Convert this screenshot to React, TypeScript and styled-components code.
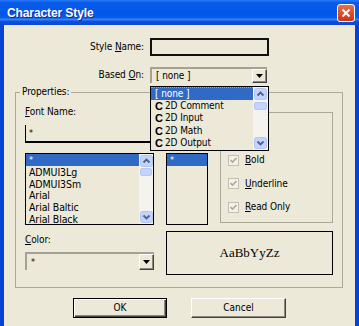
import React from 'react';
import styled, { createGlobalStyle } from 'styled-components';

const UI = `"DejaVu Sans Condensed", "Liberation Sans", Arial, sans-serif`;
const BG = '#ECE9D8';
const SEL = '#316AC5';

const Global = createGlobalStyle`
  html, body { margin: 0; padding: 0; background: ${BG}; }
  body { width: 359px; height: 326px; overflow: hidden; }
`;

const Window = styled.div`
  width: 359px;
  height: 326px;
  display: flex;
  flex-direction: column;
  background: #0A4FDD;
  font-family: ${UI};
  font-size: 10px;
  letter-spacing: -0.1px;
  color: #000;
  overflow: hidden;
`;

const TitleBar = styled.div`
  height: 25px;
  flex: none;
  display: flex;
  align-items: center;
  justify-content: space-between;
  padding: 0 4px 0 7px;
  background: linear-gradient(180deg, #2A7AF4 0%, #0A5DEA 10%, #0256E8 60%, #0B5CEA 70%, #3A80F2 78%, #0C50DC 86%, #0848D4 100%);
`;

const Title = styled.span`
  color: #fff;
  font-family: "Liberation Sans", Arial, sans-serif;
  font-weight: bold;
  font-size: 12px;
  letter-spacing: -0.1px;
  text-shadow: 1px 1px 0 #0A2A9C;
`;

const CloseBtn = styled.div`
  width: 18px;
  height: 18px;
  box-sizing: border-box;
  border: 1px solid #fff;
  border-radius: 3px;
  background: linear-gradient(180deg, #E8704E 0%, #D9482A 60%, #C6381C 100%);
  display: flex;
  align-items: center;
  justify-content: center;
`;

const Frame = styled.div`
  flex: 1;
  display: flex;
  border-left: 4px solid #0842D4;
  border-right: 4px solid #0842D4;
  border-bottom: 4px solid #0833C8;
`;

const Body = styled.div`
  flex: 1;
  background: ${BG};
  padding: 13px 0 9px;
  display: flex;
  flex-direction: column;
`;

const FormGrid = styled.div`
  display: grid;
  grid-template-columns: 140px 119px;
  grid-template-rows: 18px 16px;
  column-gap: 6px;
  row-gap: 11px;
  align-items: center;
`;

const RightLabel = styled.label`
  justify-self: end;
  line-height: 12px;
`;

const NameBox = styled.div`
  height: 18px;
  box-sizing: border-box;
  border: 2px solid #111;
`;

const ComboWrap = styled.div<{ $w: number; $h: number }>`
  position: relative;
  width: ${p => p.$w}px;
  height: ${p => p.$h}px;
  box-sizing: border-box;
  border-top: 2px solid #A5A294;
  border-left: 2px solid #A5A294;
  display: flex;
  align-items: stretch;
`;

const ComboText = styled.div`
  flex: 1;
  padding-left: 4px;
  display: flex;
  align-items: center;
  line-height: 12px;
  white-space: nowrap;
`;

const DropBtn = styled.div`
  width: 15px;
  box-sizing: border-box;
  border-top: 1px solid #fff;
  border-left: 1px solid #fff;
  border-right: 1px solid #404040;
  border-bottom: 1px solid #404040;
  box-shadow: inset -1px -1px 0 #8C8A80;
  display: flex;
  align-items: center;
  justify-content: center;
`;

const DropList = styled.div`
  position: absolute;
  top: 17px;
  left: -2px;
  width: 119px;
  height: 65px;
  box-sizing: border-box;
  border: 1px solid #000;
  background: ${BG};
  display: flex;
  z-index: 5;
`;

const DropItems = styled.div`
  flex: 1;
  display: flex;
  flex-direction: column;
`;

const DropItem = styled.div<{ $sel?: boolean }>`
  height: 12.5px;
  line-height: 12px;
  padding-left: 4px;
  display: flex;
  align-items: center;
  gap: 3px;
  white-space: nowrap;
  background: ${p => (p.$sel ? SEL : 'transparent')};
  color: ${p => (p.$sel ? '#fff' : '#000')};
  border-top: ${p => (p.$sel ? '1px dotted #E8A040' : 'none')};
  box-sizing: border-box;
`;

const StyleIcon = styled.span`
  font-weight: bold;
  font-family: "Liberation Sans", Arial, sans-serif;
  font-size: 11px;
  width: 7px;
`;

const Scroll = styled.div<{ $w: number }>`
  width: ${p => p.$w}px;
  flex: none;
  display: flex;
  flex-direction: column;
  padding: 1px 0;
  box-sizing: border-box;
  background: #F4F3EE;
`;

const Track = styled.div`
  flex: 1;
  display: flex;
  flex-direction: column;
`;

const Thumb = styled.div`
  height: 8px;
  margin: 0 1px;
  border-radius: 2px;
  background: #C3D3FB;
  border: 1px solid #B5C8F3;
  box-sizing: border-box;
`;

const Group = styled.fieldset`
  margin: 3px 0 0 11px;
  width: 328px;
  box-sizing: border-box;
  border: 1px solid #ACA899;
  padding: 0 0 12px 0;
  min-width: 0;
`;

const Legend = styled.legend`
  margin-left: 4px;
  padding: 0 2px;
  line-height: 12px;
  font-size: 10px;
`;

const GroupInner = styled.div`
  display: flex;
  gap: 12px;
  padding-left: 9px;
`;

const Col = styled.div<{ $w: number }>`
  width: ${p => p.$w}px;
  display: flex;
  flex-direction: column;
`;

const FieldLabel = styled.label<{ $mt: number }>`
  margin-top: ${p => p.$mt}px;
  line-height: 12px;
  height: 12px;
  white-space: nowrap;
`;

const OpenBox = styled.div`
  margin-top: 7px;
  height: 18px;
  box-sizing: border-box;
  border-left: 1px solid #000;
  border-bottom: 2px solid #000;
  padding-left: 3px;
  display: flex;
  align-items: center;
  font-size: 9px;
`;

const ListBox = styled.div`
  margin-top: 10px;
  height: 72px;
  box-sizing: border-box;
  border: 1px solid #000;
  display: flex;
  overflow: hidden;
`;

const ListItems = styled.div`
  flex: 1;
  display: flex;
  flex-direction: column;
  min-width: 0;
`;

const ListItem = styled.div<{ $sel?: boolean }>`
  height: 11.75px;
  line-height: 12px;
  padding-left: 3px;
  white-space: nowrap;
  flex: none;
  background: ${p => (p.$sel ? SEL : 'transparent')};
  color: ${p => (p.$sel ? '#fff' : '#000')};
  font-size: ${p => (p.$sel ? '9px' : '10.5px')};
`;

const RightArea = styled.div`
  width: 167px;
  display: flex;
  flex-direction: column;
`;

const TopRow = styled.div`
  display: flex;
  gap: 12px;
`;

const AttrGroup = styled.div`
  margin-top: 14px;
  width: 113px;
  height: 111px;
  box-sizing: border-box;
  border: 1px solid #ACA899;
  padding: 41px 0 0 7px;
  display: flex;
  flex-direction: column;
  gap: 11.5px;
`;

const CheckRow = styled.div`
  height: 12px;
  display: flex;
  align-items: center;
  gap: 6px;
  line-height: 12px;
`;

const Preview = styled.div`
  margin-top: 6px;
  height: 44px;
  box-sizing: border-box;
  border: 1px solid #000;
  display: flex;
  align-items: center;
  justify-content: center;
  font-family: "Liberation Serif", "Times New Roman", serif;
  font-size: 13px;
  letter-spacing: 0;
`;

const ComboBox = styled.div`
  margin-top: 6px;
  height: 18px;
  box-sizing: border-box;
  border-top: 2px solid #A5A294;
  border-left: 2px solid #A5A294;
  display: flex;
`;

const ButtonRow = styled.div`
  margin-top: 10px;
  display: flex;
  justify-content: center;
  gap: 24px;
`;

const Button = styled.button<{ $default?: boolean }>`
  width: ${p => (p.$default ? 94 : 95)}px;
  height: 20px;
  box-sizing: border-box;
  font-family: ${UI};
  font-size: 10px;
  color: #000;
  background: ${BG};
  padding: 0;
  line-height: 12px;
  border-style: solid;
  border-width: 1px;
  border-color: ${p => (p.$default ? '#000' : '#fff #404040 #404040 #fff')};
  box-shadow: ${p => (p.$default ? 'inset 1px 1px 0 #fff, inset -1px -1px 0 #404040, inset -2px -2px 0 #8C8A80' : 'inset -1px -1px 0 #8C8A80')};
`;

const ScrollArrow = ({ down }: { down?: boolean }) => (
  <svg width="13" height="12" viewBox="0 0 13 12" style={{ display: 'block', margin: '0 auto' }}>
    <rect x="0.5" y="0.5" width="12" height="11" rx="2" fill="#C3D3FB" stroke="#B2C5F2" />
    <path
      d={down ? 'M3.5 4.5 L6.5 7.5 L9.5 4.5' : 'M3.5 7.5 L6.5 4.5 L9.5 7.5'}
      stroke="#4D6185"
      strokeWidth="1.8"
      fill="none"
    />
  </svg>
);

const ScrollBar = ({ w, thumbTop }: { w: number; thumbTop: number }) => (
  <Scroll $w={w}>
    <ScrollArrow />
    <Track>
      <Thumb style={{ marginTop: thumbTop }} />
    </Track>
    <ScrollArrow down />
  </Scroll>
);

const DropArrow = () => (
  <svg width="7" height="4" viewBox="0 0 7 4">
    <path d="M0 0 H7 L3.5 4 Z" fill="#000" />
  </svg>
);

const CheckBox = () => (
  <svg width="11" height="11" viewBox="0 0 11 11" style={{ flex: 'none' }}>
    <rect x="0.5" y="0.5" width="10" height="10" fill="#F2F1EA" stroke="#C2BFB0" />
    <path d="M2.5 5 L4.5 7 L8.5 3" stroke="#ACA899" strokeWidth="1.6" fill="none" />
  </svg>
);

const CloseIcon = () => (
  <svg width="10" height="10" viewBox="0 0 10 10">
    <path d="M1.5 1.5 L8.5 8.5 M8.5 1.5 L1.5 8.5" stroke="#fff" strokeWidth="2" />
  </svg>
);

const fonts = ['ADMUI3Lg', 'ADMUI3Sm', 'Arial', 'Arial Baltic', 'Arial Black'];
const styles = ['2D Comment', '2D Input', '2D Math', '2D Output'];

export default function App() {
  return (
    <>
      <Global />
      <Window>
        <TitleBar>
          <Title>Character Style</Title>
          <CloseBtn>
            <CloseIcon />
          </CloseBtn>
        </TitleBar>
        <Frame>
          <Body>
            <FormGrid>
              <RightLabel>
                Style <u>N</u>ame:
              </RightLabel>
              <NameBox />
              <RightLabel>
                Based <u>O</u>n:
              </RightLabel>
              <ComboWrap $w={117} $h={16}>
                <ComboText>[ none ]</ComboText>
                <DropBtn>
                  <DropArrow />
                </DropBtn>
                <DropList>
                  <DropItems>
                    <DropItem $sel>[ none ]</DropItem>
                    {styles.map(s => (
                      <DropItem key={s}>
                        <StyleIcon>C</StyleIcon>
                        {s}
                      </DropItem>
                    ))}
                  </DropItems>
                  <ScrollBar w={15} thumbTop={2} />
                </DropList>
              </ComboWrap>
            </FormGrid>

            <Group>
              <Legend>Properties:</Legend>
              <GroupInner>
                <Col $w={129}>
                  <FieldLabel $mt={8}>
                    <u>F</u>ont Name:
                  </FieldLabel>
                  <OpenBox>*</OpenBox>
                  <ListBox>
                    <ListItems>
                      <ListItem $sel>*</ListItem>
                      {fonts.map(f => (
                        <ListItem key={f}>{f}</ListItem>
                      ))}
                    </ListItems>
                    <ScrollBar w={14} thumbTop={1} />
                  </ListBox>
                  <FieldLabel $mt={9}>
                    <u>C</u>olor:
                  </FieldLabel>
                  <ComboBox>
                    <ComboText>
                      <span style={{ fontSize: 9 }}>*</span>
                    </ComboText>
                    <DropBtn>
                      <DropArrow />
                    </DropBtn>
                  </ComboBox>
                </Col>
                <RightArea>
                  <TopRow>
                    <Col $w={42}>
                      <FieldLabel $mt={8} />
                      <OpenBox />
                      <ListBox>
                        <ListItems>
                          <ListItem $sel>*</ListItem>
                        </ListItems>
                      </ListBox>
                    </Col>
                    <AttrGroup>
                      <CheckRow>
                        <CheckBox />
                        <span>
                          <u>B</u>old
                        </span>
                      </CheckRow>
                      <CheckRow>
                        <CheckBox />
                        <span>
                          <u>U</u>nderline
                        </span>
                      </CheckRow>
                      <CheckRow>
                        <CheckBox />
                        <span>
                          <u>R</u>ead Only
                        </span>
                      </CheckRow>
                    </AttrGroup>
                  </TopRow>
                  <Preview>AaBbYyZz</Preview>
                </RightArea>
              </GroupInner>
            </Group>

            <ButtonRow>
              <Button $default>OK</Button>
              <Button>Cancel</Button>
            </ButtonRow>
          </Body>
        </Frame>
      </Window>
    </>
  );
}
